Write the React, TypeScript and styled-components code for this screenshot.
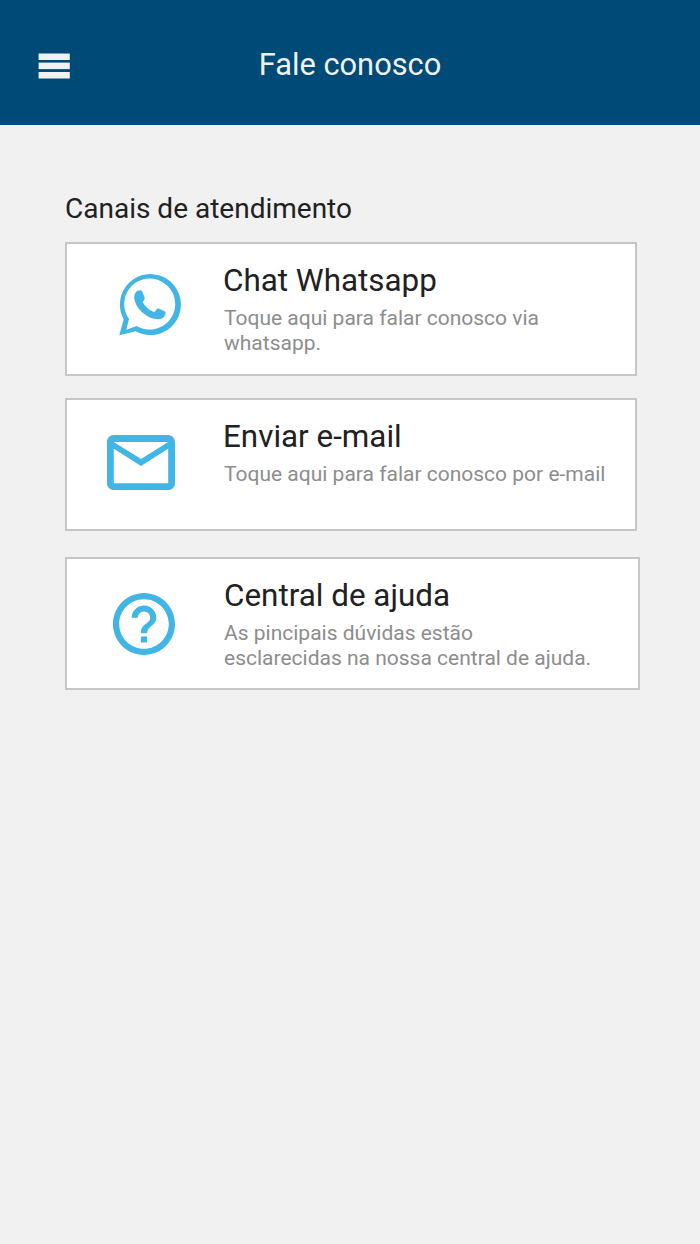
import React from "react";
import styled, { createGlobalStyle } from "styled-components";

const GlobalStyle = createGlobalStyle`
  * { box-sizing: border-box; }
  body { margin: 0; background: #f1f1f1; font-family: Roboto, "Liberation Sans", sans-serif; }
`;

const Screen = styled.div`
  min-height: 1244px;
  background: #f1f1f1;
`;

const Header = styled.header`
  display: grid;
  grid-template-columns: 70px 1fr 70px;
  align-items: center;
  height: 125px;
  padding-top: 4px;
  background: #004a77;
`;

const MenuButton = styled.button`
  width: 32px;
  margin: 3px 0 0 38px;
  padding: 0;
  border: 0;
  background: none;
  svg { display: block; }
`;

const Title = styled.h1`
  margin: 0;
  text-align: center;
  font-size: 30.8px;
  line-height: 36px;
  font-weight: 400;
  color: #f1f1f1;
`;

const Main = styled.main`
  padding: 66px 60px 0 65px;
`;

const SectionTitle = styled.h2`
  margin: 0 0 16px;
  font-size: 28px;
  line-height: 35px;
  font-weight: 400;
  color: #212121;
`;

const Card = styled.a<{ $width: number; $height: number; $gap: number }>`
  display: flex;
  width: ${(p) => p.$width}px;
  height: ${(p) => p.$height}px;
  margin-bottom: ${(p) => p.$gap}px;
  border: 2px solid #c6c6c6;
  background: #fff;
`;

const IconSlot = styled.div<{ $left: number; $top: number }>`
  flex: 0 0 156px;
  padding: ${(p) => p.$top}px 0 0 ${(p) => p.$left}px;
  svg { display: block; }
`;

const CardTitle = styled.h3<{ $indent: number }>`
  margin: 18px 0 6px ${(p) => p.$indent}px;
  font-size: 31.4px;
  line-height: 38px;
  font-weight: 400;
  color: #212121;
`;

const CardText = styled.p`
  margin: 0 0 0 1px;
  font-size: 21px;
  line-height: 25px;
  color: #8d8d8d;
  white-space: pre;
`;

const MenuIcon = () => (
  <svg width="32" height="27" viewBox="0 0 32 27" fill="#f1f1f1">
    <rect x="0.600" y="0.500" width="31.200" height="6.500" />
    <rect x="0.600" y="9.600" width="31.200" height="6.500" />
    <rect x="0.600" y="19" width="31.200" height="6.500" />
  </svg>
);

const WhatsappIcon = () => (
  <svg width="62" height="62" viewBox="57 42 186 186" fill="#41b6e6">
    <path
      fillRule="evenodd"
      d="M58 226L71 178A91.500 91.500 0 1 1 107 214ZM79 209L110 198A76.500 76.500 0 1 0 87 177Z"
    />
    <path d="M105 101C108 94 114 91 121 91C125 91 127 94 128 98L134 113C135 117 132 121 128 126C136 141 148 151 163 157L169 149C172 145 175 145 179 147L194 154C197 156 197 158 196 162C194 173 184 178 173 178C160 178 143 171 130 160C117 149 106 134 103 117C102 111 103 106 105 101Z" />
  </svg>
);

const MailIcon = () => (
  <svg width="68" height="55" viewBox="2 4 20 16" preserveAspectRatio="none" fill="#41b6e6">
    <path d="M22 6c0-1.100-.9-2-2-2H4c-1.100 0-2 .9-2 2v12c0 1.100.9 2 2 2h16c1.100 0 2-.9 2-2V6zm-2 0l-8 5-8-5h16zm0 12H4V8l8 5 8-5v10z" />
  </svg>
);

const HelpIcon = () => (
  <svg width="62" height="62" viewBox="2 2 20 20" fill="#41b6e6">
    <path d="M11 18h2v-2h-2v2zm1-16C6.480 2 2 6.480 2 12s4.480 10 10 10 10-4.480 10-10S17.520 2 12 2zm0 18c-4.410 0-8-3.590-8-8s3.590-8 8-8 8 3.590 8 8-3.590 8-8 8zm0-14c-2.210 0-4 1.790-4 4h2c0-1.100.9-2 2-2s2 .9 2 2c0 2-3 1.750-3 5h2c0-2.250 3-2.500 3-5 0-2.210-1.790-4-4-4z" />
  </svg>
);

const channels = [
  { title: "Chat Whatsapp", text: "Toque aqui para falar conosco via\nwhatsapp.", Icon: WhatsappIcon, left: 52, top: 30, width: 572, height: 134, gap: 22, indent: 0 },
  { title: "Enviar e-mail", text: "Toque aqui para falar conosco por e-mail", Icon: MailIcon, left: 40, top: 35, width: 572, height: 133, gap: 26, indent: 0 },
  { title: "Central de ajuda", text: "As pincipais dúvidas estão\nesclarecidas na nossa central de ajuda.", Icon: HelpIcon, left: 46, top: 34, width: 575, height: 133, gap: 0, indent: 1 },
];

export default function App() {
  return (
    <Screen>
      <GlobalStyle />
      <Header>
        <MenuButton aria-label="Menu"><MenuIcon /></MenuButton>
        <Title>Fale conosco</Title>
      </Header>
      <Main>
        <SectionTitle>Canais de atendimento</SectionTitle>
        {channels.map(({ title, text, Icon, left, top, width, height, gap, indent }) => (
          <Card key={title} $width={width} $height={height} $gap={gap}>
            <IconSlot $left={left} $top={top}><Icon /></IconSlot>
            <div>
              <CardTitle $indent={indent}>{title}</CardTitle>
              <CardText>{text}</CardText>
            </div>
          </Card>
        ))}
      </Main>
    </Screen>
  );
}
